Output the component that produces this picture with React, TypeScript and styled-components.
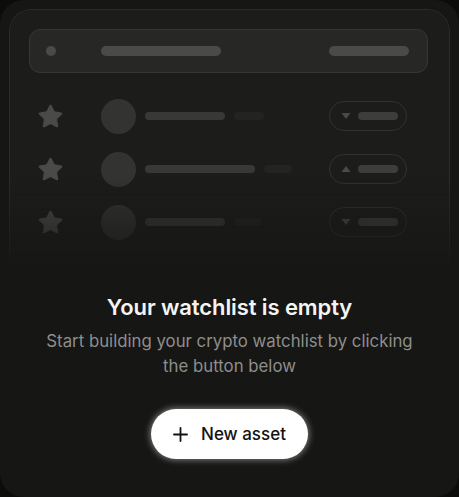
import React from "react";
import styled, { createGlobalStyle } from "styled-components";

const Global = createGlobalStyle`
  html, body { margin: 0; padding: 0; background: #0c0c0b; }
  body { font-family: Inter, "Noto Sans", sans-serif; -webkit-font-smoothing: antialiased; }
  * { box-sizing: border-box; }
`;

const Card = styled.div`
  width: 459px;
  height: 497px;
  border-radius: 24px;
  background: #161615;
  padding: 9px;
  display: flex;
  flex-direction: column;
  align-items: center;
  overflow: hidden;
`;

const Frame = styled.div`
  align-self: stretch;
  height: 272px;
  flex-shrink: 0;
  border: 1px solid #2c2c2b;
  border-radius: 22px;
  background: #1c1c1b;
  padding: 19px 21px 0 19px;
  -webkit-mask-image: linear-gradient(to bottom, #000 62%, transparent 100%);
  mask-image: linear-gradient(to bottom, #000 62%, transparent 100%);
`;

const HeaderBar = styled.div`
  height: 44px;
  border-radius: 11px;
  background: #272726;
  border: 1px solid #363635;
  display: flex;
  align-items: center;
  padding: 0 18px 0 16px;
`;

const Dot = styled.div`
  width: 10px;
  height: 10px;
  border-radius: 50%;
  background: #4a4a49;
`;

const Bar = styled.div<{ $w: number; $h?: number; $c: string; $ml?: number }>`
  width: ${(p) => p.$w}px;
  height: ${(p) => p.$h ?? 10}px;
  border-radius: 999px;
  background: ${(p) => p.$c};
  margin-left: ${(p) => p.$ml ?? 0}px;
  flex-shrink: 0;
`;

const Spacer = styled.div`
  flex: 1;
`;

const Rows = styled.div`
  display: flex;
  flex-direction: column;
  gap: 17px;
  margin-top: 25px;
  padding: 0 21px 0 8px;
`;

const Row = styled.div`
  display: flex;
  align-items: center;
  height: 36px;
`;

const StarIcon = styled.svg`
  width: 27px;
  height: 27px;
  flex-shrink: 0;
  fill: #4a4a49;
  stroke: #4a4a49;
  stroke-width: 1;
  stroke-linejoin: round;
`;

const Avatar = styled.div`
  width: 35px;
  height: 35px;
  border-radius: 50%;
  background: #333332;
  margin-left: 37px;
  flex-shrink: 0;
`;

const Pill = styled.div`
  width: 78px;
  height: 30px;
  border-radius: 15px;
  border: 1.5px solid #323231;
  display: flex;
  align-items: center;
  padding-left: 11px;
  gap: 7px;
  flex-shrink: 0;
`;

const Tri = styled.svg`
  width: 10px;
  height: 8px;
  fill: #4a4a49;
`;

const Content = styled.div`
  display: flex;
  flex-direction: column;
  align-items: center;
  margin-top: 11px;
`;

const Title = styled.h1`
  margin: 0;
  font-size: 22px;
  line-height: 30px;
  font-weight: 600;
  color: #f4f4f2;
  letter-spacing: -0.1px;
`;

const Subtitle = styled.p`
  margin: 7px 0 0;
  max-width: 380px;
  text-align: center;
  font-size: 16.8px;
  line-height: 25px;
  color: #8e8e8b;
`;

const Button = styled.button`
  margin-top: 30px;
  height: 50px;
  width: 157px;
  border: none;
  border-radius: 25px;
  background: #ffffff;
  color: #121212;
  display: flex;
  align-items: center;
  justify-content: center;
  gap: 13px;
  font-family: inherit;
  font-size: 17px;
  font-weight: 500;
  box-shadow: 0 0 6px 1px rgba(255, 255, 255, 0.45);
  cursor: pointer;
  padding: 0;
`;

const PlusIcon = styled.svg`
  width: 15px;
  height: 15px;
  stroke: #121212;
  stroke-width: 1.8;
  stroke-linecap: round;
`;

const Star = () => (
  <StarIcon viewBox="0 0 24 24">
    <path d="M11.525 2.295a.53.53 0 0 1 .95 0l2.31 4.679a2.123 2.123 0 0 0 1.595 1.16l5.166.756a.53.53 0 0 1 .294.904l-3.736 3.638a2.123 2.123 0 0 0-.611 1.878l.882 5.14a.53.53 0 0 1-.771.56l-4.618-2.428a2.122 2.122 0 0 0-1.973 0L6.396 21.01a.53.53 0 0 1-.77-.56l.881-5.139a2.122 2.122 0 0 0-.611-1.879L2.16 9.795a.53.53 0 0 1 .294-.906l5.165-.755a2.122 2.122 0 0 0 1.597-1.160z" />
  </StarIcon>
);

const rows = [
  { name: 80, sub: 30, up: false },
  { name: 110, sub: 28, up: true },
  { name: 80, sub: 28, up: false },
];

export default function App() {
  return (
    <>
      <Global />
      <Card>
        <Frame>
          <HeaderBar>
            <Dot />
            <Bar $w={120} $c="#4a4a49" $ml={45} />
            <Spacer />
            <Bar $w={80} $c="#4a4a49" />
          </HeaderBar>
          <Rows>
            {rows.map((r, i) => (
              <Row key={i}>
                <Star />
                <Avatar />
                <Bar $w={r.name} $h={8} $c="#383837" $ml={9} />
                <Bar $w={r.sub} $h={8} $c="#232322" $ml={9} />
                <Spacer />
                <Pill>
                  <Tri viewBox="0 0 10 8">
                    {r.up ? <path d="M5 1 L9.5 7 L0.5 7 Z" /> : <path d="M0.5 1 L9.5 1 L5 7 Z" />}
                  </Tri>
                  <Bar $w={40} $h={8} $c="#3d3d3c" />
                </Pill>
              </Row>
            ))}
          </Rows>
        </Frame>
        <Content>
          <Title>Your watchlist is empty</Title>
          <Subtitle>Start building your crypto watchlist by clicking the button below</Subtitle>
          <Button>
            <PlusIcon viewBox="0 0 15 15">
              <path d="M7.5 1 V14 M1 7.5 H14" />
            </PlusIcon>
            New asset
          </Button>
        </Content>
      </Card>
    </>
  );
}
